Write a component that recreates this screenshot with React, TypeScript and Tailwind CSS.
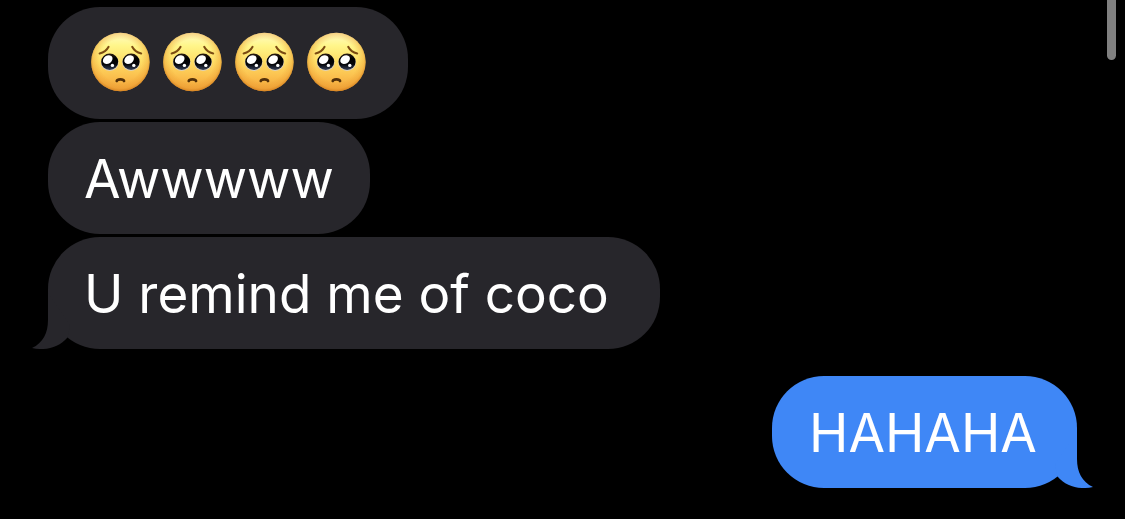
import type { ReactNode } from "react";

type Side = "received" | "sent";

function PleadingFace() {
  return (
    <svg viewBox="0 0 60 60" className="h-[60px] w-[60px]" role="img" aria-label="Pleading face">
      <defs>
        <linearGradient id="faceFill" x1="0" y1="0" x2="0" y2="1">
          <stop offset="0" stopColor="#fffbc4" />
          <stop offset="0.22" stopColor="#fff68a" />
          <stop offset="0.5" stopColor="#fedc64" />
          <stop offset="0.75" stopColor="#fbc04e" />
          <stop offset="1" stopColor="#f0a238" />
        </linearGradient>
        <radialGradient id="faceEdge" cx="0.5" cy="0.48" r="0.52">
          <stop offset="0.7" stopColor="#ec9a2c" stopOpacity="0" />
          <stop offset="0.9" stopColor="#ea9a30" stopOpacity="0.4" />
          <stop offset="1" stopColor="#d07c1c" stopOpacity="0.8" />
        </radialGradient>
        <linearGradient id="eyeFill" x1="0" y1="0" x2="0" y2="1">
          <stop offset="0" stopColor="#2a1c10" />
          <stop offset="0.3" stopColor="#000000" />
          <stop offset="0.65" stopColor="#050508" />
          <stop offset="1" stopColor="#35405a" />
        </linearGradient>
      </defs>
      <circle cx="30.4" cy="30" r="29.2" fill="url(#faceFill)" />
      <circle cx="30.4" cy="30" r="29.2" fill="url(#faceEdge)" />
      <g fill="none" stroke="#7a4a12" strokeWidth="2" strokeLinecap="round">
        <path d="M9.600 21.500Q16 20 18.600 14.800" />
        <path d="M51.200 21.500Q44.800 20 42.200 14.800" />
      </g>
      <g fill="#ddd0b8">
        <ellipse cx="19.7" cy="30.5" rx="8.9" ry="8.5" />
        <ellipse cx="41.1" cy="30.5" rx="8.9" ry="8.5" />
      </g>
      <g fill="url(#eyeFill)">
        <ellipse cx="19.7" cy="29.8" rx="8.5" ry="8.2" />
        <ellipse cx="41.1" cy="29.8" rx="8.5" ry="8.2" />
      </g>
      <g fill="#ffffff">
        <ellipse cx="17.7" cy="27.6" rx="5.2" ry="4" transform="rotate(-35 17.7 27.6)" />
        <ellipse cx="39.1" cy="27.6" rx="5.2" ry="4" transform="rotate(-35 39.1 27.6)" />
        <circle cx="22.4" cy="33.4" r="1.7" />
        <circle cx="43.8" cy="33.4" r="1.7" />
      </g>
      <path
        d="M26.800 49Q27.200 47.400 30.400 47.400Q33.600 47.400 34 49"
        fill="none"
        stroke="#52300a"
        strokeWidth="2.8"
        strokeLinecap="round"
      />
    </svg>
  );
}

function Tail({ side }: { side: Side }) {
  return (
    <svg
      viewBox="0 0 48 64"
      aria-hidden="true"
      className={
        side === "sent"
          ? "absolute -right-4 bottom-0 h-16 w-12 fill-[#3f87f6]"
          : "absolute bottom-0 -left-4 h-16 w-12 -scale-x-100 fill-[#27262b]"
      }
    >
      <path d="M32 8V35C32 48 37 58 48 63C34 66 21 62.500 12.500 52.500L10 40Z" />
    </svg>
  );
}

function Bubble({ side, tail = false, children }: { side: Side; tail?: boolean; children: ReactNode }) {
  return (
    <li
      className={
        side === "sent"
          ? "relative flex h-28 min-w-[305px] items-center self-end rounded-[52px] bg-[#3f87f6] px-[37px]"
          : "relative flex h-28 items-center self-start rounded-[52px] bg-[#27262b] px-9"
      }
    >
      {tail && <Tail side={side} />}
      <div className="relative whitespace-pre">{children}</div>
    </li>
  );
}

function Text({ children }: { children: string }) {
  return <p className="pt-[2px]">{children}</p>;
}

export default function App() {
  return (
    <main className="relative min-h-screen bg-black pt-[7px] pr-12 pb-[31px] pl-12 font-['Inter','Liberation_Sans',sans-serif] text-[53px] leading-[66px] text-white">
      <ul className="flex flex-col gap-[27px]">
        <li>
          <ul className="flex flex-col gap-[3px]">
            <Bubble side="received">
              <span className="flex gap-3 px-1.5 pb-[2px]">
                <PleadingFace />
                <PleadingFace />
                <PleadingFace />
                <PleadingFace />
              </span>
            </Bubble>
            <Bubble side="received">
              <Text>Awwwww</Text>
            </Bubble>
            <Bubble side="received" tail>
              <Text>{"U remind me of coco "}</Text>
            </Bubble>
          </ul>
        </li>
        <Bubble side="sent" tail>
          <Text>HAHAHA</Text>
        </Bubble>
      </ul>
      <div className="absolute top-0 right-[9px] h-[60px] w-[9px] rounded-b-full bg-[#808080]" />
    </main>
  );
}
